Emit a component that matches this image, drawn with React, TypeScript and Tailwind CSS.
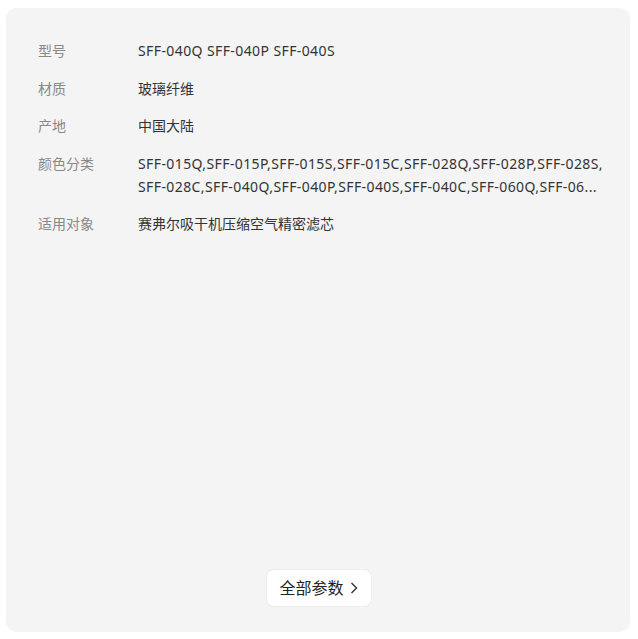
import React from "react";

const rows: { label: string; lines: string[]; latin?: boolean }[] = [
  { label: "型号", lines: ["SFF-040Q SFF-040P SFF-040S"], latin: true },
  { label: "材质", lines: ["玻璃纤维"] },
  { label: "产地", lines: ["中国大陆"] },
  {
    label: "颜色分类",
    lines: [
      "SFF-015Q,SFF-015P,SFF-015S,SFF-015C,SFF-028Q,SFF-028P,SFF-028S,",
      "SFF-028C,SFF-040Q,SFF-040P,SFF-040S,SFF-040C,SFF-060Q,SFF-06...",
    ],
    latin: true,
  },
  { label: "适用对象", lines: ["赛弗尔吸干机压缩空气精密滤芯"] },
];

export default function App() {
  return (
    <div
      className="w-[638px] h-[639px] bg-white pt-[8px] pl-[6px]"
      style={{ fontFamily: '"Noto Sans", "Noto Sans CJK SC", sans-serif' }}
    >
      <div className="w-[624px] h-[624px] bg-[#f4f4f4] rounded-[10px] flex flex-col pt-[31px] pb-[25px] pl-[32px] pr-[30px]">
        <div className="flex flex-col gap-[14.5px]">
          {rows.map((r) => (
            <div key={r.label} className="flex text-[14px] leading-[23px]">
              <div className="w-[100px] shrink-0 text-[#888888]">{r.label}</div>
              <div
                className={
                  "flex-1 min-w-0 text-[#333333] " +
                  (r.latin ? "tracking-[0.4px]" : "")
                }
              >
                {r.lines.map((l, i) => (
                  <div key={i} className="whitespace-nowrap">
                    {l}
                  </div>
                ))}
              </div>
            </div>
          ))}
        </div>
        <div className="flex-1" />
        <div className="flex justify-center">
          <button className="h-[38px] w-[106px] bg-white rounded-[8px] border border-[#ececec] flex items-center justify-center gap-[5px] text-[16px] text-[#222222]">
            <span>全部参数</span>
            <svg width="10" height="14" viewBox="0 0 10 14" fill="none">
              <path d="M2.5 2 L7.5 7 L2.5 12" stroke="#333" strokeWidth="1.4" />
            </svg>
          </button>
        </div>
      </div>
    </div>
  );
}
